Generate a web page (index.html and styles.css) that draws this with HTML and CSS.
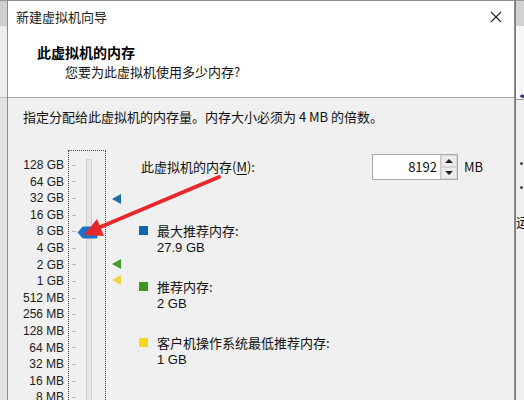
FILE: index.html
```html
<!DOCTYPE html>
<html lang="zh-CN">
<head>
<meta charset="utf-8">
<title>新建虚拟机向导</title>
<link rel="stylesheet" href="styles.css">
</head>
<body>
<div class="desk">
  <div class="gutter-left">
    <div class="gl-top"></div>
    <div class="gl-mid"></div>
    <div class="gl-bot"></div>
  </div>
  <div class="dialog">
    <div class="titlebar">
      <span class="title">新建虚拟机向导</span>
      <svg class="close" width="12" height="12" viewBox="0 0 12 12"><path d="M1 1 L11 11 M11 1 L1 11" stroke="#222" stroke-width="1.1" fill="none"/></svg>
    </div>
    <div class="header">
      <h1>此虚拟机的内存</h1>
      <p>您要为此虚拟机使用多少内存?</p>
    </div>
    <div class="content">
      <p class="intro">指定分配给此虚拟机的内存量。内存大小必须为 4 MB 的倍数。</p>
      <div class="main">
        <ul class="scale">
          <li>128 GB</li><li>64 GB</li><li>32 GB</li><li>16 GB</li><li>8 GB</li>
          <li>4 GB</li><li>2 GB</li><li>1 GB</li><li>512 MB</li><li>256 MB</li>
          <li>128 MB</li><li>64 MB</li><li>32 MB</li><li>16 MB</li><li>8 MB</li>
        </ul>
        <div class="slider">
          <ul class="ticks">
            <li></li><li></li><li></li><li></li><li></li><li></li><li></li><li></li>
            <li></li><li></li><li></li><li></li><li></li><li></li><li></li>
          </ul>
          <div class="track"></div>
          <svg class="thumb" width="21" height="13" viewBox="0 0 21 13"><path d="M0.5 6.5 L5.5 0.8 Q6 0.5 7 0.5 L19.5 0.5 Q20.5 0.5 20.5 1.5 L20.5 11.5 Q20.5 12.5 19.5 12.5 L7 12.5 Q6 12.5 5.5 12.2 Z" fill="#1c72c4"/></svg>
        </div>
        <div class="markers">
          <span class="tri tri-blue" style="top:44px"></span>
          <span class="tri tri-green" style="top:109px"></span>
          <span class="tri tri-yellow" style="top:125px"></span>
        </div>
        <div class="panel">
          <div class="mem-row">
            <span class="mem-label">此虚拟机的内存(<u>M</u>):</span>
            <div class="spin">
              <span class="spin-value">8192</span>
              <div class="spin-btns">
                <span class="spin-btn"><i class="up"></i></span>
                <span class="spin-btn"><i class="down"></i></span>
              </div>
            </div>
            <span class="unit">MB</span>
          </div>
          <div class="legend">
            <div class="item"><span class="sq sq-blue"></span><div class="txt"><div>最大推荐内存:</div><div class="val">27.9 GB</div></div></div>
            <div class="item"><span class="sq sq-green"></span><div class="txt"><div>推荐内存:</div><div class="val">2 GB</div></div></div>
            <div class="item"><span class="sq sq-yellow"></span><div class="txt"><div>客户机操作系统最低推荐内存:</div><div class="val">1 GB</div></div></div>
          </div>
        </div>
      </div>
    </div>
  </div>
  <div class="gutter-right">
    <div class="gr-top"></div>
    <div class="gr-mid"><span class="blob"></span></div>
    <div class="gr-bot">
      <span class="dot d1"></span>
      <span class="dot d2"></span>
      <span class="cut">运</span>
    </div>
  </div>
</div>
<svg class="annot" width="524" height="400" viewBox="0 0 524 400">
  <line x1="219" y1="177" x2="98" y2="228" stroke="#e8262b" stroke-width="4" stroke-linecap="round"/>
  <polygon points="84,235 97,219 104,236" fill="#e8262b"/>
</svg>
</body>
</html>
```
FILE: styles.css
```css
* { box-sizing: border-box; }
html, body { margin: 0; padding: 0; }
body {
  width: 524px;
  height: 400px;
  overflow: hidden;
  position: relative;
  background: #f0f0f0;
  font-family: "Noto Sans CJK SC", "Noto Sans", sans-serif;
  font-size: 13px;
  color: #111;
}
.desk { display: flex; height: 400px; }

.gutter-left { width: 7px; flex: none; display: flex; flex-direction: column; }
.gl-top { height: 26px; flex: none; background: #cfcfcf; border-top: 1px solid #9a9a9a; }
.gl-mid { height: 72px; flex: none; background: #ececec; border-bottom: 1px solid #c4c4c4; }
.gl-bot { flex: 1; background: #e4e4e4; }

.dialog {
  width: 508px;
  flex: none;
  border: 1px solid #8c8c8c;
  border-bottom: none;
  background: #f0f0f0;
  display: flex;
  flex-direction: column;
  overflow: hidden;
}
.titlebar {
  flex: none;
  height: 32px;
  background: #fff;
  display: flex;
  align-items: center;
  justify-content: space-between;
  padding: 0 12px 0 8px;
}
.title { font-size: 13px; line-height: 18px; color: #222; }
.close { display: block; }

.header {
  flex: none;
  background: #fff;
  height: 65px;
  border-bottom: 1px solid #a8a8a8;
  padding: 9px 0 0 29px;
}
.header h1 {
  margin: 0;
  font-size: 14px;
  font-weight: 700;
  line-height: 20px;
  color: #000;
}
.header p { margin: 0 0 0 28px; line-height: 20px; color: #111; }

.content { flex: none; padding: 10px 0 0 15px; }
.intro { margin: 0; line-height: 18px; }

.main { display: flex; margin-top: 24px; }

.scale {
  list-style: none;
  margin: 0;
  padding: 7px 0 0;
  width: 41px;
  flex: none;
  text-align: right;
  white-space: nowrap;
  font-family: "Liberation Sans", Arial, sans-serif;
  font-size: 12px;
  color: #1a1a1a;
}
.scale li { line-height: 16.6px; height: 16.6px; }

.slider {
  position: relative;
  margin-left: 4px;
  width: 38px;
  height: 260px;
  border: 1px dotted #444;
  border-bottom: none;
  flex: none;
}
.ticks { list-style: none; margin: 0; padding: 6px 0 0 3px; }
.ticks li { height: 16.6px; display: flex; align-items: center; }
.ticks li::before { content: ""; display: block; width: 4px; height: 1px; background: #b8b8b8; }
.track {
  position: absolute;
  left: 17px;
  top: 8px;
  bottom: 0;
  width: 6px;
  background: #e6e6e6;
  border: 1px solid #d2d2d2;
  border-bottom: none;
}
.thumb { position: absolute; left: 8px; top: 75px; display: block; }

.markers { position: relative; width: 33px; flex: none; }
.tri {
  position: absolute;
  left: 6px;
  width: 0;
  height: 0;
  border-top: 5px solid transparent;
  border-bottom: 5px solid transparent;
  border-right: 9px solid;
}
.tri-blue { border-right-color: #1e6cae; }
.tri-green { border-right-color: #469a2c; }
.tri-yellow { border-right-color: #f1d43c; }

.panel { padding-top: 4px; }
.mem-row { display: flex; align-items: center; height: 26px; }
.mem-label { width: 233px; padding-left: 2px; line-height: 18px; }
.mem-label u { text-decoration: underline; text-underline-offset: 2px; }
.spin {
  width: 86px;
  height: 26px;
  border: 1px solid #a9a9a9;
  background: #fff;
  display: flex;
}
.spin-value { flex: 1; text-align: right; padding-right: 3px; line-height: 24px; }
.spin-btns { width: 17px; display: flex; flex-direction: column; border-left: 1px solid #c8c8c8; }
.spin-btn {
  flex: 1;
  background: #ececec;
  border: 1px solid #d6d6d6;
  display: flex;
  align-items: center;
  justify-content: center;
}
.spin-btn i { width: 0; height: 0; border-left: 4px solid transparent; border-right: 4px solid transparent; }
.spin-btn .up { border-bottom: 4px solid #222; }
.spin-btn .down { border-top: 4px solid #222; }
.unit { margin-left: 6px; line-height: 18px; }

.legend { margin-top: 42px; display: flex; flex-direction: column; gap: 22px; }
.item { display: flex; gap: 9px; }
.sq { width: 9px; height: 9px; margin-top: 4px; flex: none; }
.sq-blue { background: #0f67b1; }
.sq-green { background: #3d9522; }
.sq-yellow { background: #f7d71a; }
.txt div { line-height: 17px; }
.txt .val { font-family: "Liberation Sans", Arial, sans-serif; font-size: 13px; }

.gutter-right { width: 9px; flex: none; display: flex; flex-direction: column; border-left: 1px solid #7c7c7c; overflow: hidden; }
.gr-top { height: 26px; flex: none; background: #d2d2d2; border-top: 1px solid #9a9a9a; }
.gr-mid { height: 74px; flex: none; background: #f7f7f7; position: relative; border-bottom: 1px solid #9c9c9c; }
.blob { position: absolute; left: 2px; top: 56px; width: 10px; height: 16px; border-radius: 50%; border: 3px solid #2a3d7a; border-left-color: transparent; border-top-color: transparent; }
.gr-bot { flex: 1; background: #efefef; position: relative; }
.dot { position: absolute; left: 4px; width: 3px; height: 3px; border-radius: 50%; background: #444; }
.d1 { top: 62px; }
.d2 { top: 86px; }
.cut { position: absolute; left: 0px; top: 113px; font-size: 13px; line-height: 18px; }

.annot { position: absolute; left: 0; top: 0; pointer-events: none; }
```
